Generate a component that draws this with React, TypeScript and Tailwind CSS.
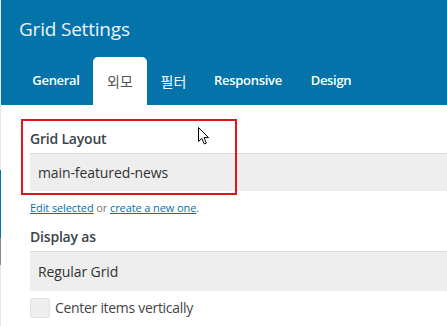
import React from 'react';

const tabs = [
  { label: 'General', w: 'w-[74px]' },
  { label: '외모', w: 'w-[54px]' },
  { label: '필터', w: 'w-[53px]' },
  { label: 'Responsive', w: 'w-[96px]' },
  { label: 'Design', w: 'w-[70px]' },
];
const active = 1;

function Cursor() {
  return (
    <svg width="13" height="20" viewBox="0 0 13 20" className="absolute left-[197px] top-[126px]">
      <path
        d="M1.5 1.5 L1.5 15.5 L4.8 12.4 L7.3 18 L9.4 17.1 L7 11.6 L11.5 11.6 Z"
        fill="#fff"
        stroke="#000"
        strokeWidth="1"
        strokeLinejoin="round"
      />
    </svg>
  );
}

export default function App() {
  return (
    <div
      className="relative w-[447px] h-[326px] overflow-hidden bg-white flex"
      style={{ fontFamily: '"Open Sans", "Noto Sans CJK KR", sans-serif' }}
    >
      {/* page edge behind the dialog */}
      <div className="w-px flex flex-col shrink-0">
        <div className="h-[170px] bg-[#e6e6e6]" />
        <div className="h-[68px] bg-[#0073aa]" />
        <div className="h-[27px] bg-[#8c8c8c]" />
        <div className="flex-1 bg-[#e6e6e6]" />
      </div>

      <div className="flex-1 flex flex-col min-w-0">
        {/* Header */}
        <div className="bg-[#0473aa] pl-[18px]">
          <div className="h-[57px] flex items-center pt-[2px] text-[19px] text-[#eef4f8] tracking-[-0.2px]">
            Grid Settings
          </div>
          <div className="flex h-[48px]">
            {tabs.map((t, i) => (
              <div
                key={t.label}
                className={
                  i === active
                    ? `${t.w} shrink-0 flex items-center justify-center bg-white rounded-t-[5px] text-[#555] text-[14px]`
                    : i === 2
                      ? `${t.w} shrink-0 flex items-center justify-center text-white text-[14px]`
                      : `${t.w} shrink-0 flex items-center justify-center text-white text-[13px] font-semibold tracking-[-0.3px]`
                }
              >
                {t.label}
              </div>
            ))}
          </div>
        </div>

        {/* Body */}
        <div className="flex flex-col pl-[29px] pt-[24px] mr-[-40px]">
          <div className="text-[14px] font-semibold text-[#3c434a] leading-[20px] tracking-[-0.2px]">Grid Layout</div>
          <div className="mt-[4px] h-[38px] bg-[#eeeeee] border-t border-[#d9d9d9] flex items-center pl-[8px] text-[14px] text-[#333] tracking-[-0.1px]">
            main-featured-news
          </div>
          <div className="mt-[10px] text-[11px] leading-[14px] text-[#777] tracking-[-0.1px]">
            <span className="text-[#0073aa] underline">Edit selected</span> or{' '}
            <span className="text-[#0073aa] underline">create a new one</span>.
          </div>
          <div className="mt-[12px] text-[14px] font-semibold text-[#3c434a] leading-[20px] tracking-[-0.2px]">Display as</div>
          <div className="mt-[4px] h-[40px] bg-[#eeeeee] border-t border-[#d9d9d9] flex items-center pl-[8px] text-[14px] text-[#333] tracking-[-0.1px]">
            Regular Grid
          </div>
          <div className="mt-[7px] flex items-center gap-[5px] h-[20px]">
            <div className="w-[20px] h-[20px] rounded-[3px] bg-[#eeeeee] border border-[#e2e2e2]" />
            <span className="text-[14px] leading-[20px] text-[#444] tracking-[-0.3px]">Center items vertically</span>
          </div>
        </div>
      </div>

      {/* highlight annotation */}
      <div className="absolute left-[21px] top-[119px] w-[216px] h-[76px] border-2 border-[#e3141d]" />
      <Cursor />
    </div>
  );
}
